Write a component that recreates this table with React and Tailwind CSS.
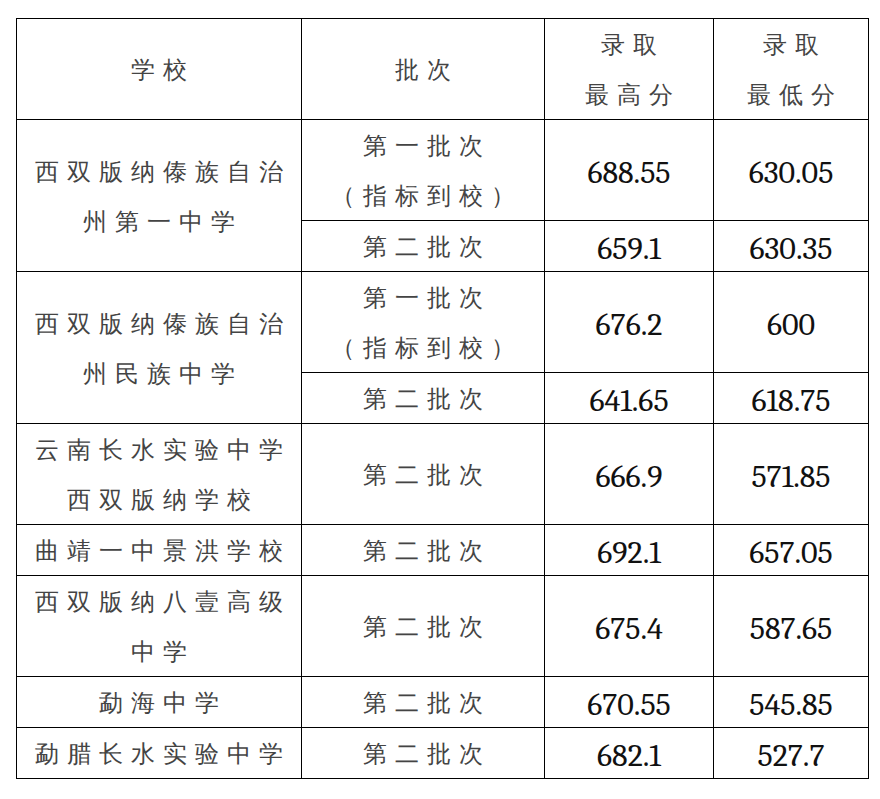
const ROWS = [
  {
    school: ["西双版纳傣族自治", "州第一中学"],
    batches: [
      { name: ["第一批次", "（指标到校）"], high: "688.55", low: "630.05", tall: true },
      { name: ["第二批次"], high: "659.1", low: "630.35" },
    ],
  },
  {
    school: ["西双版纳傣族自治", "州民族中学"],
    batches: [
      { name: ["第一批次", "（指标到校）"], high: "676.2", low: "600", tall: true },
      { name: ["第二批次"], high: "641.65", low: "618.75" },
    ],
  },
  {
    school: ["云南长水实验中学", "西双版纳学校"],
    batches: [{ name: ["第二批次"], high: "666.9", low: "571.85", tall: true }],
  },
  {
    school: ["曲靖一中景洪学校"],
    batches: [{ name: ["第二批次"], high: "692.1", low: "657.05" }],
  },
  {
    school: ["西双版纳八壹高级", "中学"],
    batches: [{ name: ["第二批次"], high: "675.4", low: "587.65", tall: true }],
  },
  {
    school: ["勐海中学"],
    batches: [{ name: ["第二批次"], high: "670.55", low: "545.85" }],
  },
  {
    school: ["勐腊长水实验中学"],
    batches: [{ name: ["第二批次"], high: "682.1", low: "527.7" }],
  },
];

const cjk =
  "font-light text-[24px] tracking-[8px] leading-[50px] text-[#444] pl-[8px]";
const cell = "border border-black text-center align-middle p-0";

const Lines = ({ lines }) =>
  lines.map((l, i) => (
    <div key={i} className="whitespace-nowrap">
      {l}
    </div>
  ));

const Num = ({ value }) => (
  <td className={`${cell} pt-[6px]`}>
    <span className="font-serif text-[32px] leading-none text-[#111]">
      {value}
    </span>
  </td>
);

const App = () => {
  return (
    <div className="w-[880px] h-[799px] bg-white pt-[18px] pl-[16px] font-sans">
      <table className="table-fixed border-collapse w-[852px]">
        <colgroup>
          <col className="w-[285px]" />
          <col className="w-[243px]" />
          <col className="w-[169px]" />
          <col className="w-[155px]" />
        </colgroup>
        <thead>
          <tr className="h-[101px]">
            <th className={`${cell} ${cjk}`}>学校</th>
            <th className={`${cell} ${cjk}`}>批次</th>
            <th className={`${cell} ${cjk}`}>
              <Lines lines={["录取", "最高分"]} />
            </th>
            <th className={`${cell} ${cjk}`}>
              <Lines lines={["录取", "最低分"]} />
            </th>
          </tr>
        </thead>
        <tbody>
          {ROWS.map((row) =>
            row.batches.map((b, i) => (
              <tr
                key={row.school.join("") + i}
                className={b.tall ? "h-[101px]" : "h-[51px]"}
              >
                {i === 0 && (
                  <td rowSpan={row.batches.length} className={`${cell} ${cjk}`}>
                    <Lines lines={row.school} />
                  </td>
                )}
                <td className={`${cell} ${cjk}`}>
                  <Lines lines={b.name} />
                </td>
                <Num value={b.high} />
                <Num value={b.low} />
              </tr>
            ))
          )}
        </tbody>
      </table>
    </div>
  );
};

export default App;
